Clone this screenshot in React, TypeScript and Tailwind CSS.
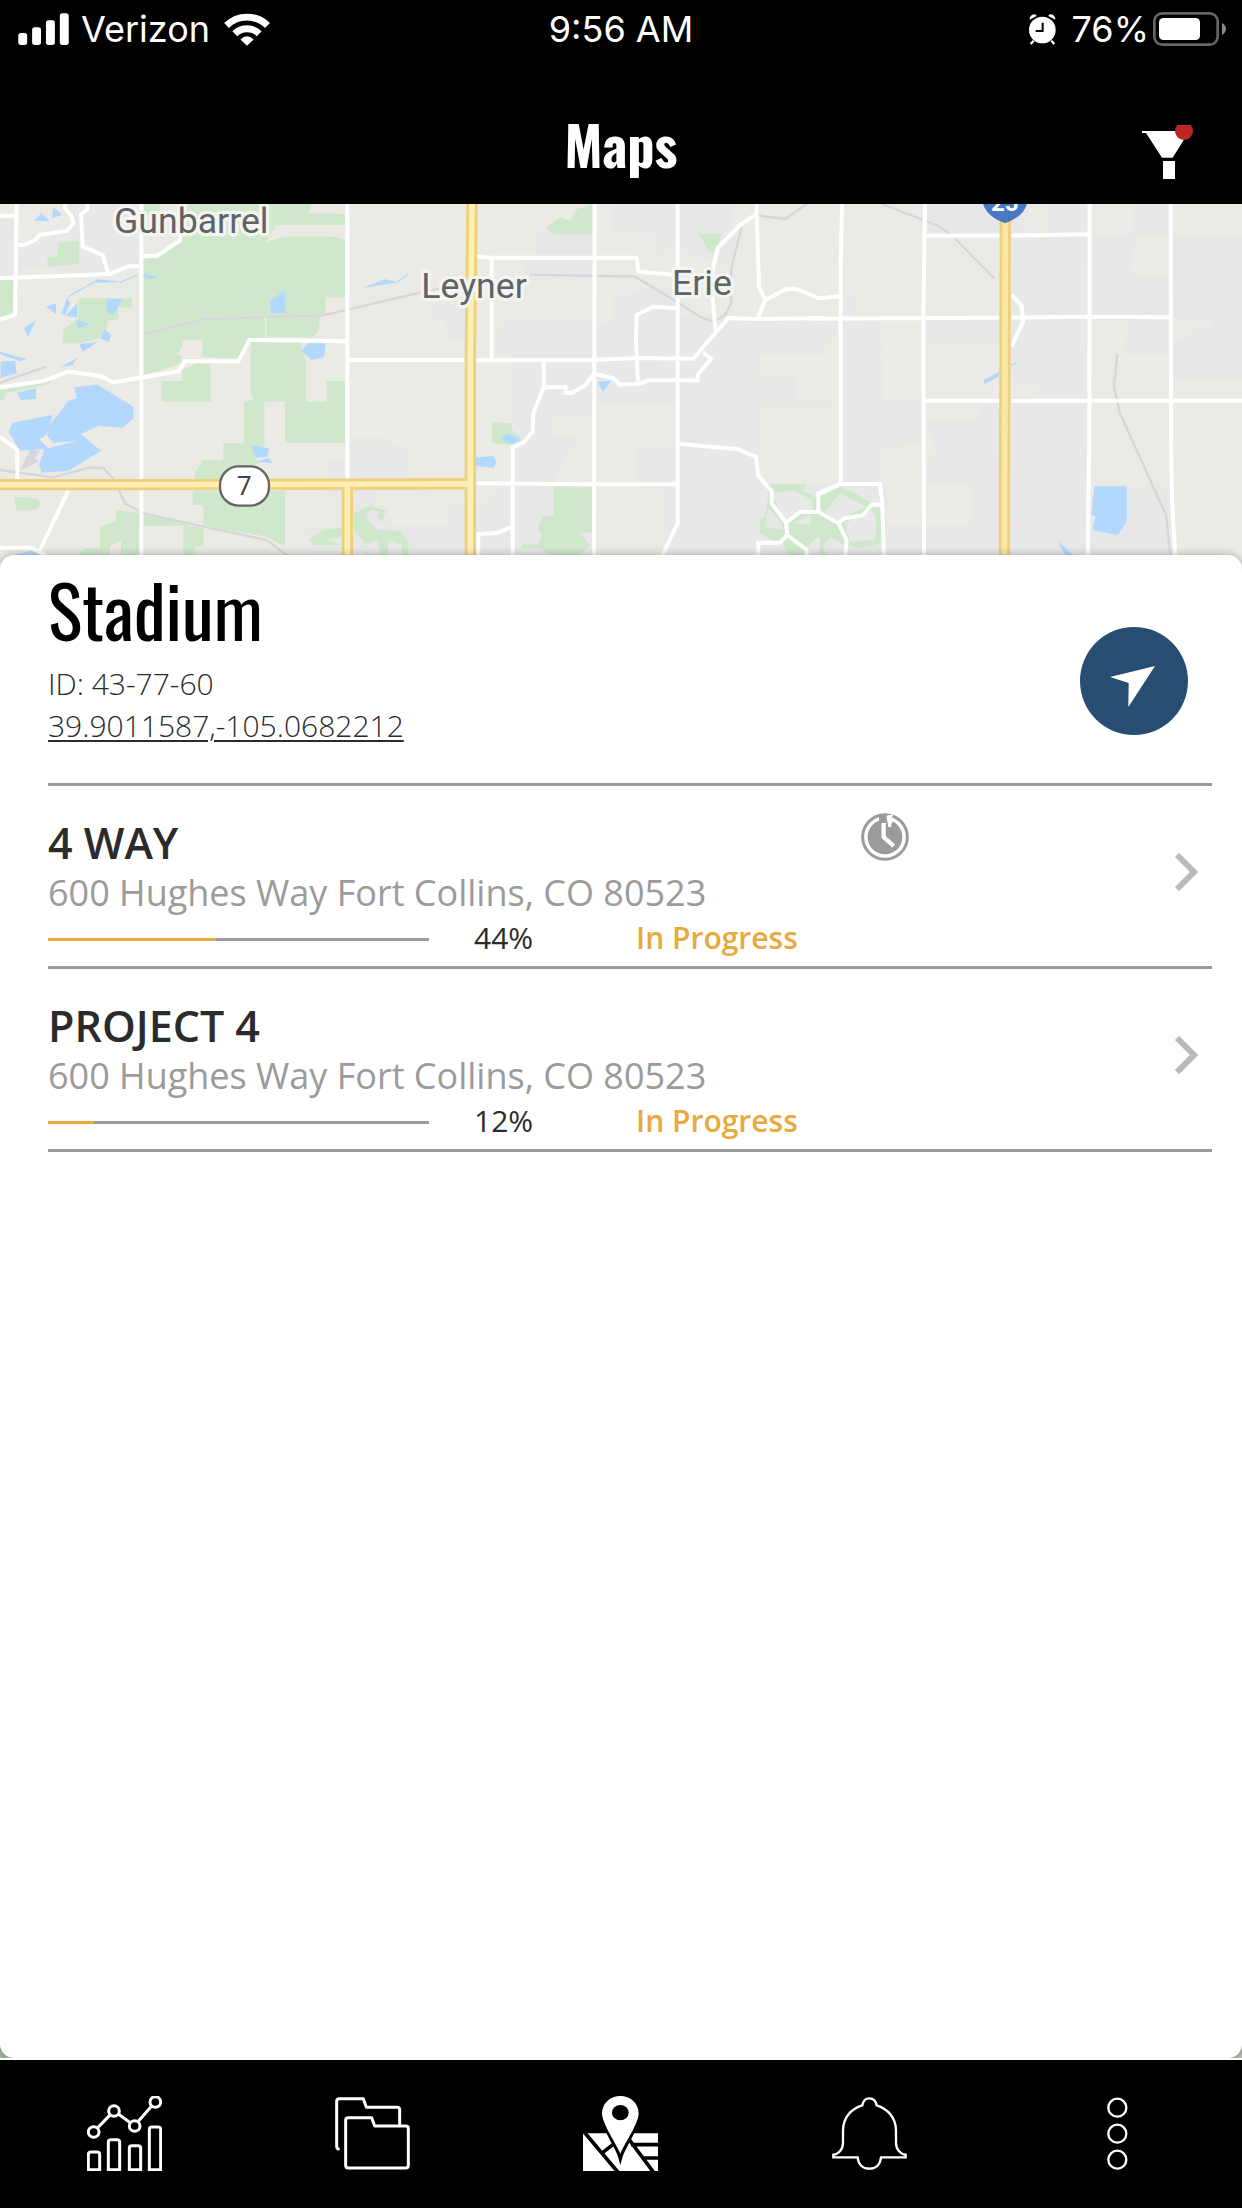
import { ReactNode, useState } from "react";

type Project = {
    id: number
    name: string
    address: string
    percent: number
    status: string
    pending: boolean
}

const projects: Project[] = [
    { id: 1, name: "4 WAY", address: "600 Hughes Way Fort Collins, CO 80523", percent: 44, status: "In Progress", pending: true },
    { id: 2, name: "PROJECT 4", address: "600 Hughes Way Fort Collins, CO 80523", percent: 12, status: "In Progress", pending: false },
]

const StatusBar = () => (
    <div className="grid h-[60px] grid-cols-3 items-center px-4 pb-[2px] font-['Inter',sans-serif] text-[36px] leading-[58px]">
        <div className="flex items-center gap-3 pl-[2px]">
            <svg viewBox="0 0 153 97" className="h-8 w-[51px]" fill="white">
                <rect x="0" y="61" width="27" height="36" rx="8" />
                <rect x="42" y="43" width="27" height="54" rx="8" />
                <rect x="84" y="22" width="27" height="75" rx="8" />
                <rect x="126" y="1" width="27" height="96" rx="8" />
            </svg>
            <span>Verizon</span>
            <svg viewBox="0 0 138 100" className="ml-[2px] h-[33px] w-[46px]" fill="none" stroke="white" strokeWidth="21">
                <path d="M7 38A88 88 0 0 1 131 38" />
                <path d="M32 63A53 53 0 0 1 106 63" />
                <path d="M69 99L49 80Q69 61 89 80Z" fill="white" stroke="none" />
            </svg>
        </div>
        <div className="text-center">9:56 AM</div>
        <div className="flex items-center justify-end">
            <svg viewBox="0 0 81 93" className="mr-4 h-[31px] w-[27px]">
                <path d="M2 17Q2 3 16 1Q22 1 23 6Z M79 17Q79 3 65 1Q59 1 58 6Z" fill="white" />
                <path d="M14 80L5 90M67 80L76 90" stroke="white" strokeWidth="7" />
                <circle cx="40" cy="48" r="40" fill="white" />
                <path d="M41 26V51H20" fill="none" stroke="black" strokeWidth="6" />
            </svg>
            <span className="mr-1">76%</span>
            <svg viewBox="0 0 219 102" className="h-[34px] w-[73px]">
                <rect x="4" y="4" width="190" height="94" rx="24" fill="none" stroke="#666666" strokeWidth="8" />
                <rect x="18" y="18" width="123" height="66" rx="13" fill="white" />
                <path d="M207 33Q219 40 219 51T207 69Z" fill="#8a8a8a" />
            </svg>
        </div>
    </div>
)

const Header = () => (
    <header className="grid h-[144px] grid-cols-3 items-center px-[49px] pt-6">
        <h1 className="col-start-2 text-center font-['Oswald','Liberation_Sans_Narrow','Liberation_Sans',sans-serif] text-[54px] leading-[64px] font-bold">Maps</h1>
        <button type="button" aria-label="Filter" className="mt-4 justify-self-end">
            <svg viewBox="0 0 153 162" className="block h-[54px] w-[51px]">
                <path d="M0 18H142L92 98H60L12 24H0Z" fill="white" />
                <path d="M63 108H99V162H63Z" fill="white" />
                <circle cx="126" cy="18" r="27" fill="#bd2626" />
            </svg>
        </button>
    </header>
)

const MapView = () => (
    <svg viewBox="0 12 3726 1089" preserveAspectRatio="xMidYMin slice" className="block h-[363px] w-full bg-[#ebeae4]" role="img" aria-label="Map of Gunbarrel, Leyner and Erie">
        {/* built-up areas */}
        <g fill="#e8e8e8">
            <path d="M0 50H50V225H0ZM55 140L120 105L215 95L220 70L195 12H420V195L385 200L330 220L80 205L55 222Z" />
            <path d="M1050 712H1165V735H1222V880H1125V915H1165V975H1260V1101H1060ZM985 780H1040V895H985ZM918 985H1035V1101H918Z" />
            <g transform="translate(1230 0)">
                <path d="M603 12H970V200L860 170L800 120L735 180V95H603ZM377 95H550V225L340 220V180H377ZM60 320L170 300V420H110L105 360H60Z" />
                <path d="M260 400L290 360L610 370V290L800 250V340L910 370L960 350L1260 355V410L1240 420V465H1045V525H1162V602H1260V618H1050V850H1260V1101H765V870H675V740H800V610H550V652H425V710H520L470 760L430 850H310V480L255 440Z" />
                <path d="M118 915L240 910L270 860H550V1101H0V975H118Z" />
            </g>
            <g transform="translate(2460 0)">
                <path d="M315 12H610V95H575V100H315ZM70 285H108V345H70ZM685 12H800V100H685ZM575 105H945L930 230H1050V465H912L920 360H810V1101H575V590H657V545H575Z" />
                <path d="M940 12H1060V105H1266V540H1060V422H1110V387H1175V355H1060V108H940Z" />
                <path d="M0 360H50V400L12 430L0 470ZM70 360H187V600H310V730L180 740V850H70ZM315 365H540V425H315ZM315 660H482V610H540V1101H0V860H200V975H455V852H315V800L350 765L330 700ZM820 862H1050V1101H810Z" />
            </g>
        </g>

        {/* parks */}
        <g fill="#cfe8cc">
            <path d="M430 12H480V40L430 48ZM565 12H935L925 40L1035 42V75H830L793 128L850 110H1000L1035 118V292H977V340L958 350V390L940 412H800L750 420L715 475H668L608 470V420H548V440L528 465H545V490L480 510L430 525V180L470 170L540 120Z" />
            <path d="M752 425H905V455L918 478V605H980V543H1035V728H855V605H793V740H755L775 790L700 838H583V820L610 780H670V730H732V605L760 600L752 580ZM485 543H545L548 510L590 488L632 490V605H485Z" />
            <path d="M578 872H855V1040L800 1010L610 978V915H578ZM550 975L610 985V1040H585V1101H550ZM430 945L560 972L550 978H430ZM350 930L418 940V1101H363V1020L330 1040V1101H240V1055L255 1045H300V980L345 965Z" />
            <path d="M40 890L110 895L122 912L108 930L50 932ZM173 128L237 122V192L142 200V170H173ZM0 240H40V342L0 355ZM0 570L160 543L140 555L20 578L10 600H0ZM235 295H395V325L355 320V357L322 362L320 390L295 415L240 430H188L190 390L235 355Z" />
            <path d="M1060 940L1110 918L1158 932L1145 968L1125 940L1098 952L1130 990L1200 992L1225 1025V1101H1205V1035L1165 1020L1160 1101H1060L1095 1065V1030L1060 990ZM928 1018L970 990L1025 983L1022 1010L980 1020L1025 1035L940 1035Z" />
            <g transform="translate(1230 0)">
                <path d="M408 85L452 52L483 63L497 28L548 15V103H432ZM866 102H935L915 155H898ZM246 665L306 670V690L335 712L300 735L246 728Z" />
                <path d="M432 860H552V998H508L540 1035L510 1065H415L390 1045L336 1045V1033H380L398 1005L382 988L398 948H432Z" />
                <path d="M1080 853H1187L1180 875L1260 910V1030L1225 1010L1190 1040V1101H1150L1120 1030L1085 1020L1050 1000V960L1065 950Z" />
            </g>
            <g transform="translate(2460 0)">
                <path d="M0 890L60 862L100 875L180 925L187 1030L120 1043L70 1035L30 1010L20 1040L35 1101H0V1010L10 1000L0 960Z" />
            </g>
        </g>
        <g fill="#e8e8e8">
            <path d="M1098 945L1115 930L1140 935L1120 960ZM1085 1035L1130 1020L1140 1060L1110 1065Z" />
            <g transform="translate(1230 0)">
                <path d="M1085 880L1150 870L1205 900L1210 930L1165 930L1125 965ZM1075 925L1115 970L1120 988L1065 980ZM1150 970L1200 945L1205 975ZM1050 1040L1110 1035L1130 1101H1050Z" />
            </g>
            <g transform="translate(2460 0)">
                <path d="M15 935L60 880L140 920L75 950L55 968ZM75 970L155 930L170 960L165 1020L90 1025ZM8 1035L30 1018L65 1045L60 1101H30Z" />
            </g>
        </g>

        {/* lakes */}
        <g fill="#b2d8fd">
            <path d="M223 562L293 554L400 620V655L368 683L297 677L242 702L303 752L206 812L125 818L117 795L133 748L60 752L26 695L38 668L157 645L152 672L205 603L230 595Z" />
            <path d="M52 578L108 565V597L62 600ZM2 485L45 482L50 520L2 533ZM0 455L80 477L60 484L0 462ZM182 502L232 473L218 495ZM72 383L106 362L84 412ZM138 320L168 310V343ZM182 343L203 292L210 312L195 345ZM197 348L232 308V353ZM230 360L271 373L232 386ZM237 432L292 427L248 455ZM320 296H369L340 345L320 338ZM313 388L334 405L327 427L301 415Z" />
            <path d="M103 62L124 38L148 63ZM155 55L160 22L187 45ZM276 248L292 238L370 246ZM430 222L473 228L457 238L430 230ZM810 305L854 270L857 339H812ZM904 453L923 430L977 430L972 472L935 480ZM752 735L807 745L803 770L768 773ZM770 785L806 773L817 790ZM1088 264L1155 238L1195 247ZM40 1065L95 1052L140 1068V1080H20Z" />
            <path d="M1564 721L1536 733L1500 716L1524 700ZM1425 773L1480 768L1490 787L1480 803L1425 797ZM1792 545L1835 543L1808 575Z" />
            <path d="M3283 859H3380V965L3353 1006L3277 990L3287 950L3274 943ZM3172 1023L3220 1065V1080L3200 1075ZM2951 540L2996 516V530L2953 552Z" />
        </g>
        <g fill="none" stroke="#b2d8fd" strokeWidth="4">
            <path d="M205 290L280 248M360 247L412 225M1195 245L1224 222M3034 496L3050 488" />
        </g>
        <path d="M135 707L156 680L140 705L160 728L235 722L145 745L117 718Z" fill="#ebeae4" />
        <path d="M60 810L90 750L120 752L105 775L118 785Z" fill="#d5d7dc" />

        {/* railways */}
        <g fill="none" stroke="#d5d7dc" strokeWidth="7">
            <path d="M430 403L610 358L970 346L1260 278L1340 262M0 548L140 500M0 810L160 832L270 802L310 804L340 835L375 910L430 940L610 980L800 1020L880 1080" />
            <path d="M1590 224L1905 230L2030 305L2100 350L2140 366L2175 345L2193 310V210L2225 80M2270 45L2355 57L2420 12" />
            <path d="M2645 12L2815 78L2855 105L2983 235M3352 462L3342 560L3360 640L3498 945L3515 1101" />
        </g>

        {/* local roads */}
        <g fill="none" stroke="white" strokeWidth="12">
            <path d="M0 47H48M50 12L45 345L0 358M50 135L75 134L105 120L120 105L200 93L220 70L215 50L195 25V12M262 12V28L243 42L248 140L308 165L325 220M0 235L330 222L385 199H420M424 12V1101M424 168H470L540 122V95" />
            <path d="M0 562L130 543L205 515L300 528L340 547L535 514L555 484H715L748 420L1042 424M1042 12V850M1042 480H1395M0 710L52 750V838M205 872L120 1050M0 1043H95L135 1065" />
            <path d="M797 350V412" stroke="#e8e8e8" strokeWidth="7" />
            <g transform="translate(1230 0)">
                <path d="M195 168L240 173H680L685 215L800 225M245 175V475M190 481L550 480L680 474L850 476L955 354L1040 357L1240 354M554 12L552 1101M803 12V970L750 1080M401 485V562L370 640L368 695L340 728L308 742V1101M403 562H467V578H487L525 557L552 521L610 535L630 554L690 551L715 541H863V525L903 476L880 458" />
                <path d="M803 325L780 323L730 320L680 345L678 420L684 545M1040 12V42L990 75L923 145L908 210V300L917 395M1040 42L1047 260L1066 300L1130 266L1160 267L1225 294L1240 295M1066 300L1042 355M200 850L550 853H803M205 1065V1002L262 998L308 980" />
                <path d="M809 732L980 747L1038 770L1045 828L1085 873V910L1128 968L1170 936H1225V880L1260 865M1128 968L1132 1005L1190 1050V1080M1132 1005L1110 1028H1045V1101" />
            </g>
            <g transform="translate(2460 0)">
                <path d="M66 12L62 200V852M0 295L62 288M-30 356L310 354L540 353M315 12L310 350L312 1101M315 107L640 106L805 103M809 12L808 700L803 1101M1052 12L1053 700L1056 900L1068 1101M575 353L810 350L1052 352M575 285L605 317L609 365L575 440M315 602H540M575 602H1266" />
                <path d="M0 880L60 852L180 852L187 910L192 1080M0 938L55 970L80 1020L75 1080M55 970L75 955L128 946L155 914H187" />
            </g>
        </g>

        {/* highways */}
        <g fill="none" stroke="#f0d07c" strokeWidth="34">
            <path d="M0 854H420L1230 852L1410 851M1416 12L1411 480V1101M1042 866V1101M3016 60L3013 1101" />
        </g>
        <g fill="none" stroke="#fdf0b2" strokeWidth="17">
            <path d="M0 854H420L1230 852L1410 851M1416 12L1411 480V1101M1042 850V1101" />
            <path d="M3016 60L3013 1101" stroke="#fae7a4" />
        </g>

        {/* road shields */}
        <rect x="660" y="799" width="147" height="118" rx="56" fill="white" stroke="#666666" strokeWidth="7" />
        <path d="M2946 -10Q2946 45 3016 70Q3084 45 3084 -10Z" fill="#4a79c4" />
        <g textAnchor="middle" className="font-['Roboto',sans-serif]">
            <text x="733" y="885" fontSize="78" fill="#444444">7</text>
            <text x="3014" y="33" fontSize="72" fontWeight="700" fill="white">25</text>
        </g>
        <g fontSize="107" fill="#5f6368" stroke="#f4f4f0" strokeWidth="20" strokeLinejoin="round" paintOrder="stroke" className="font-['Roboto',sans-serif]">
            <text x="342" y="99">Gunbarrel</text>
            <text x="1264" y="293">Leyner</text>
            <text x="2016" y="284">Erie</text>
        </g>
    </svg>
)

const PendingIcon = () => (
    <svg viewBox="0 0 144 144" className="mb-3 ml-[2px] h-12 w-12" fill="none">
        <circle cx="72" cy="72" r="67" stroke="#9b9b9b" strokeWidth="9" />
        <circle cx="72" cy="72" r="52" fill="#9b9b9b" />
        <path d="M54 4H78V36L54 24Z" fill="#9b9b9b" />
        <path d="M76 8L98 4L92 14L106 24L94 28L90 36L92 42L82 42Z" fill="white" />
        <path d="M68 30V72L98 99" stroke="white" strokeWidth="13" />
    </svg>
)

const ProjectRow = ({ project }: { project: Project }) => (
    <li className="border-b-3 border-[#9b9b9b]">
        <a href={`#project-${project.id}`} className="flex items-center pt-8 pr-[14px] pb-2">
            <div className="grow">
                <div className="flex h-[50px] items-center">
                    <h2 className="w-[72%] text-[43px] leading-[50px] font-semibold text-[#2b2b2b]">{project.name}</h2>
                    {project.pending && <PendingIcon />}
                </div>
                <p className="text-[36px] leading-[50px] text-[#9b9b9b]">{project.address}</p>
                <div className="flex items-center text-[30px] leading-10">
                    <div role="progressbar" aria-label={`${project.name} progress`} aria-valuenow={project.percent} className="mt-[2px] h-[3px] w-[381px] bg-[#9b9b9b]">
                        <div className="h-full bg-[#e8a93e]" style={{ width: `${project.percent}%` }} />
                    </div>
                    <span className="ml-[45px] w-[162px] text-[#2b2b2b]">{project.percent}%</span>
                    <span className="font-semibold text-[#e8a93e]">{project.status}</span>
                </div>
            </div>
            <svg viewBox="0 0 24 38" className="mb-8 h-[38px] w-6" fill="none" stroke="#b9b9b9" strokeWidth="6">
                <path d="M3 2L20 19L3 36" />
            </svg>
        </a>
    </li>
)

const SiteSheet = () => (
    <main className="-mt-3 grow rounded-[14px] bg-white pr-[30px] pl-12 font-['Open_Sans',sans-serif] shadow-[0_0_9px_rgba(0,0,0,0.3)]">
        <section className="flex items-center justify-between border-b-3 border-[#9b9b9b] pt-3 pr-6 pb-9">
            <div>
                <h2 className="mb-3 font-['Oswald','Liberation_Sans_Narrow','Liberation_Sans',sans-serif] text-[72px] leading-[84px] text-black">Stadium</h2>
                <div className="text-[30px] leading-[42px] font-light text-[#2b2b2b]">
                    <p>ID: 43-77-60</p>
                    <a href="#location" className="underline decoration-2 underline-offset-[3px]">39.9011587,-105.0682212</a>
                </div>
            </div>
            <button type="button" aria-label="Navigate" className="mt-12 rounded-full bg-[#274d73]">
                <svg viewBox="0 0 324 324" className="block h-[108px] w-[108px]">
                    <path d="M90 150L225 117L145 240L146 168Z" fill="white" />
                </svg>
            </button>
        </section>
        <ul>
            {projects.map((project) => (
                <ProjectRow key={project.id} project={project} />
            ))}
        </ul>
    </main>
)

const tabs: { name: string, icon: ReactNode }[] = [
    {
        name: "Dashboard",
        icon: (
            <g strokeWidth="9">
                <path d="M33 94L68 58M95 55L130 80M154 76L194 30" />
                <circle cx="20" cy="108" r="16" />
                <circle cx="81" cy="45" r="16" />
                <circle cx="143" cy="90" r="16" />
                <circle cx="205" cy="18" r="16" />
                <path d="M4 221V176Q4 168 12 168H30Q38 168 38 176V221ZM64 221V139Q64 131 72 131H90Q98 131 98 139V221ZM127 221V157Q127 149 135 149H153Q161 149 161 157V221ZM187 221V101Q187 93 195 93H213Q221 93 221 101V221Z" />
            </g>
        ),
    },
    {
        name: "Projects",
        icon: (
            <g strokeWidth="9" strokeLinecap="round" strokeLinejoin="round">
                <path d="M10 159Q5 158 5 150V16Q5 8 13 8H85L94 34H186Q194 34 194 42V85" />
                <path d="M32 73Q32 65 40 65H110L119 90H212Q220 90 220 98V208Q220 216 212 216H40Q32 216 32 208Z" />
            </g>
        ),
    },
    {
        name: "Maps",
        icon: (
            <g>
                <path d="M0 112H225V225H0Z" fill="white" stroke="none" />
                <path d="M2 106L106 230M56 172L94 142M138 130L214 232M144 146H225M176 186H225" stroke="black" strokeWidth="11" />
                <path d="M112 178C104 150 57 84 57 52A55 52 0 0 1 167 52C167 84 120 150 112 178Z" stroke="black" strokeWidth="16" />
                <path d="M112 174C104 150 57 84 57 52A55 52 0 0 1 167 52C167 84 120 150 112 174Z" fill="white" stroke="none" />
                <ellipse cx="112" cy="50" rx="25" ry="23" fill="black" stroke="none" />
            </g>
        ),
    },
    {
        name: "Notifications",
        icon: <path strokeWidth="7" d="M91 28C58 38 33 64 33 104V140C33 160 20 174 4 176V184H77C79 205 92 218 112 218C132 218 145 205 147 184H221V176C205 174 192 160 192 140V104C192 64 166 38 134 28C131 12 124 7 112 7C100 7 94 12 91 28Z" />,
    },
    {
        name: "More",
        icon: (
            <g strokeWidth="7">
                <circle cx="112" cy="35" r="27" />
                <circle cx="112" cy="113" r="27" />
                <circle cx="112" cy="191" r="27" />
            </g>
        ),
    },
]

const App = () => {
    const [active, setActive] = useState("Maps")

    return (
        <div className="flex min-h-screen flex-col bg-linear-to-r from-[#a3b89f] to-[#bdb9ad]">
            <div className="bg-black text-white">
                <StatusBar />
                <Header />
            </div>
            <MapView />
            <SiteSheet />
            <nav className="grid h-[150px] grid-cols-5 items-center border-t-2 border-white bg-black pb-[2px]">
                {tabs.map((tab) => (
                    <button key={tab.name} type="button" aria-label={tab.name} aria-pressed={active === tab.name}
                        className="flex justify-center"
                        onClick={() => setActive(tab.name)}
                    >
                        <svg viewBox="0 0 225 225" className="h-[75px] w-[75px]" fill="none" stroke="white">{tab.icon}</svg>
                    </button>
                ))}
            </nav>
        </div>
    );
}

export default App;
